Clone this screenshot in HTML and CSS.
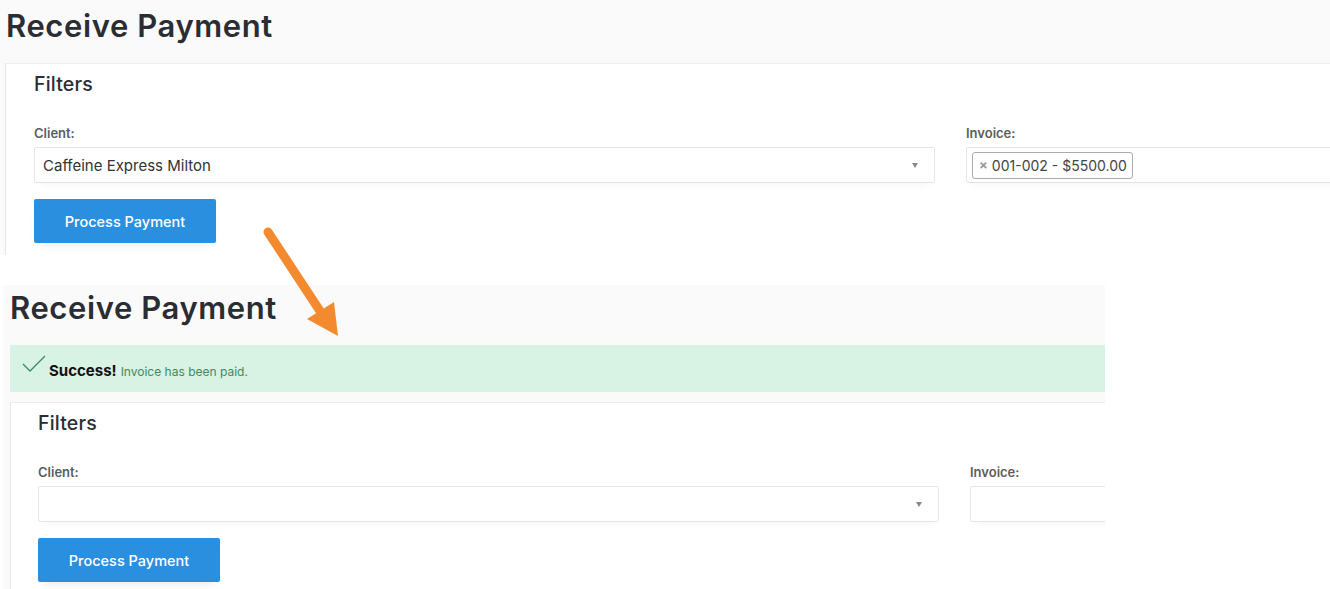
FILE: index.html
```html
<!DOCTYPE html>
<html>
<head>
<meta charset="utf-8">
<title>Receive Payment</title>
<link rel="stylesheet" href="styles.css">
</head>
<body>
<div class="page">
  <section class="shot shot-before">
    <h1 class="page-title">Receive Payment</h1>
    <div class="card">
      <h2 class="card-title">Filters</h2>
      <div class="fields">
        <div class="field">
          <label class="field-label">Client:</label>
          <div class="select">
            <span class="select-value">Caffeine Express Milton</span>
            <span class="select-caret"></span>
          </div>
        </div>
        <div class="field">
          <label class="field-label">Invoice:</label>
          <div class="select select-multi">
            <span class="tag"><span class="tag-x">×</span>001-002 - $5500.00</span>
          </div>
        </div>
      </div>
      <button class="btn">Process Payment</button>
    </div>
  </section>

  <section class="shot shot-after">
    <h1 class="page-title">Receive Payment</h1>
    <div class="alert">
      <svg class="alert-check" width="24" height="20" viewBox="0 0 24 20"><path d="M1 9 L8 16 L23 1" fill="none" stroke="#3f8a60" stroke-width="1.3"/></svg>
      <strong class="alert-strong">Success!</strong>
      <span class="alert-text">Invoice has been paid.</span>
    </div>
    <div class="card">
      <h2 class="card-title">Filters</h2>
      <div class="fields">
        <div class="field">
          <label class="field-label">Client:</label>
          <div class="select">
            <span class="select-value"></span>
            <span class="select-caret"></span>
          </div>
        </div>
        <div class="field">
          <label class="field-label">Invoice:</label>
          <div class="select select-multi"></div>
        </div>
      </div>
      <button class="btn">Process Payment</button>
    </div>
  </section>

  <svg class="arrow" width="1330" height="589" viewBox="0 0 1330 589">
    <line x1="268" y1="232" x2="322" y2="314" stroke="#f38a2f" stroke-width="9" stroke-linecap="round"/>
    <polygon points="307,319 334,302 338,336" fill="#f38a2f"/>
  </svg>
</div>
</body>
</html>
```

FILE: styles.css
```css
* { box-sizing: border-box; }
html, body { margin: 0; padding: 0; background: #ffffff; }
body {
  font-family: "Inter", "Open Sans", sans-serif;
  color: #2a2d33;
  width: 1330px;
  height: 589px;
  overflow: hidden;
}
.page { position: relative; width: 1330px; height: 589px; }

.shot {
  background: #fafafa;
  overflow: hidden;
}
.shot-before {
  width: 1330px;
  height: 255px;
  padding-left: 5px;
}
.shot-after {
  width: 1102px;
  height: 304px;
  margin-top: 30px;
  margin-left: 3px;
  padding-left: 7px;
}

.page-title {
  margin: 0;
  font-size: 31px;
  font-weight: 600;
  line-height: 36px;
  height: 63px;
  padding-top: 8px;
  padding-left: 1px;
  letter-spacing: 0.6px;
  color: #2a2d33;
}
.shot-after .page-title { height: 60px; padding-top: 5px; padding-left: 0; }

.alert {
  display: flex;
  align-items: center;
  height: 47px;
  background: #d8f2e4;
  padding-left: 12px;
  margin-bottom: 10px;
}
.alert-check { margin-right: 3px; margin-top: -8px; flex: none; }
.alert-strong { font-size: 15px; font-weight: 700; color: #111; margin-right: 4px; margin-top: 4px; }
.alert-text { font-size: 12px; color: #3f8a60; margin-top: 6px; }

.card {
  background: #ffffff;
  border-top: 1px solid #ededed;
  border-left: 1px solid #e6e6e6;
  padding: 0 0 0 28px;
  height: 200px;
}
.shot-after .card { padding-left: 27px; }
.card-title {
  margin: 0;
  font-size: 19.5px;
  font-weight: 500;
  line-height: 24px;
  padding-top: 8px;
  height: 58px;
  letter-spacing: 0.2px;
  color: #2a2d33;
}
.fields {
  display: grid;
  grid-template-columns: 901px 901px;
  column-gap: 31px;
}
.field-label {
  display: block;
  font-size: 13px;
  font-weight: 600;
  color: #5a5e62;
  line-height: 16px;
  height: 25px;
  padding-top: 3px;
}
.select {
  height: 36px;
  border: 1px solid #e1e7e7;
  border-radius: 2px;
  background: #fff;
  display: flex;
  align-items: center;
  padding: 0 16px 0 8px;
  box-shadow: 0 6px 10px -6px rgba(0,0,0,0.06);
}
.select-value { flex: 1; font-size: 15px; color: #333; }
.select-caret {
  width: 0; height: 0;
  border-left: 3.5px solid transparent;
  border-right: 3.5px solid transparent;
  border-top: 5px solid #888;
}
.select-multi { padding-left: 5px; }
.tag {
  display: inline-flex;
  align-items: center;
  height: 27px;
  border: 1px solid #aaa;
  border-radius: 3px;
  padding: 0 5px 0 6px;
  font-size: 14px;
  color: #444;
}
.tag-x { color: #999; font-weight: 700; font-size: 13px; margin-right: 4px; }

.btn {
  margin-top: 16px;
  width: 182px;
  height: 44px;
  border: none;
  border-radius: 2px;
  background: #2b8fdf;
  color: #fff;
  font-family: inherit;
  font-size: 14.5px;
  font-weight: 500;
  box-shadow: 0 6px 12px -6px rgba(0,0,0,0.12);
}

.arrow { position: absolute; left: 0; top: 0; pointer-events: none; }
```
